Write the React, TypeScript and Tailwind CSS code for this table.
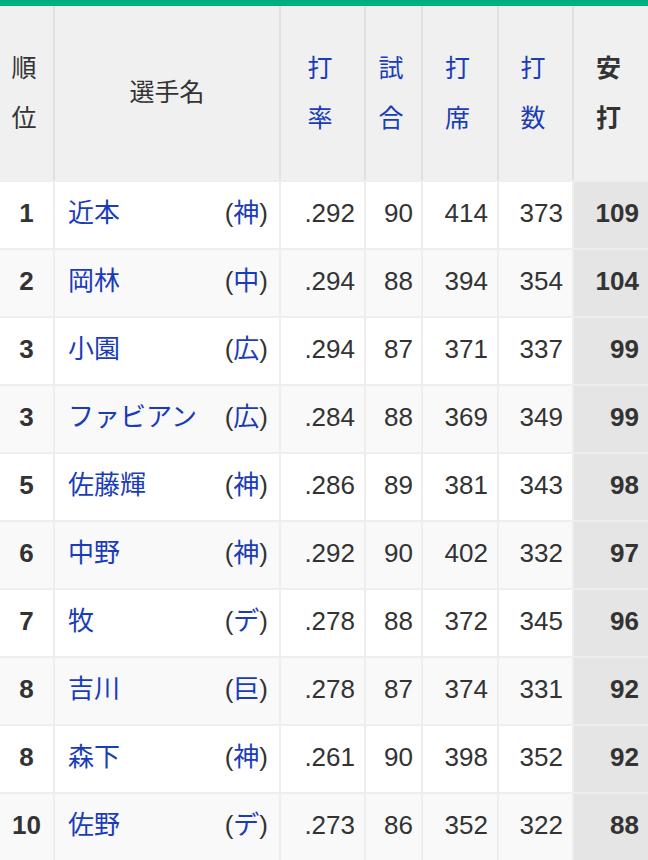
const rows = [
  { rank: "1", name: "近本", team: "神", avg: ".292", games: "90", pa: "414", ab: "373", hits: "109" },
  { rank: "2", name: "岡林", team: "中", avg: ".294", games: "88", pa: "394", ab: "354", hits: "104" },
  { rank: "3", name: "小園", team: "広", avg: ".294", games: "87", pa: "371", ab: "337", hits: "99" },
  { rank: "3", name: "ファビアン", team: "広", avg: ".284", games: "88", pa: "369", ab: "349", hits: "99" },
  { rank: "5", name: "佐藤輝", team: "神", avg: ".286", games: "89", pa: "381", ab: "343", hits: "98" },
  { rank: "6", name: "中野", team: "神", avg: ".292", games: "90", pa: "402", ab: "332", hits: "97" },
  { rank: "7", name: "牧", team: "デ", avg: ".278", games: "88", pa: "372", ab: "345", hits: "96" },
  { rank: "8", name: "吉川", team: "巨", avg: ".278", games: "87", pa: "374", ab: "331", hits: "92" },
  { rank: "8", name: "森下", team: "神", avg: ".261", games: "90", pa: "398", ab: "352", hits: "92" },
  { rank: "10", name: "佐野", team: "デ", avg: ".273", games: "86", pa: "352", ab: "322", hits: "88" },
];

const cols = "grid grid-cols-[53px_224px_83px_55px_74px_73px_74px] gap-x-[2px]";

function HeadCell({ top, bottom, link, bold }: { top: string; bottom: string; link?: boolean; bold?: boolean }) {
  return (
    <div
      className={`flex flex-col items-center justify-center bg-[#f0f0f0] text-[25px] leading-[50px] pr-[5px] ${
        link ? "text-[#1a3cb8]" : "text-[#333]"
      } ${bold ? "font-bold bg-[#e5e5e5]" : ""}`}
    >
      <span>{top}</span>
      <span>{bottom}</span>
    </div>
  );
}

export default function App() {
  return (
    <div className="w-[648px] h-[860px] overflow-hidden bg-white font-['Liberation_Sans','Noto_Sans_CJK_JP',sans-serif] text-[#333]">
      <div className="h-[6px] bg-[#00ae80]" />

      {/* Header */}
      <div className={`${cols} bg-[#e0e0e0] h-[174px]`}>
        <HeadCell top="順" bottom="位" />
        <div className="flex items-center justify-center bg-[#f0f0f0] text-[25px]">選手名</div>
        <HeadCell top="打" bottom="率" link />
        <HeadCell top="試" bottom="合" link />
        <HeadCell top="打" bottom="席" link />
        <HeadCell top="打" bottom="数" link />
        <HeadCell top="安" bottom="打" bold />
      </div>

      {/* Body */}
      <div className="flex flex-col gap-y-[2px] bg-[#eeeeee] pt-[2px]">
        {rows.map((r, i) => {
          const bg = i % 2 === 0 ? "bg-white" : "bg-[#f9f9f9]";
          return (
            <div key={i} className={`${cols} h-[66px] text-[26px]`}>
              <div className={`${bg} flex items-center justify-center font-bold pb-[3px]`}>{r.rank}</div>
              <div className={`${bg} flex items-center justify-between pl-[13px] pr-[11px] pb-[3px]`}>
                <span className="text-[#1a3cb8]">{r.name}</span>
                <span>
                  (<span className="text-[#1a3cb8]">{r.team}</span>)
                </span>
              </div>
              <div className={`${bg} flex items-center justify-end pr-[9px] pb-[3px]`}>{r.avg}</div>
              <div className={`${bg} flex items-center justify-end pr-[8px] pb-[3px]`}>{r.games}</div>
              <div className={`${bg} flex items-center justify-end pr-[9px] pb-[3px]`}>{r.pa}</div>
              <div className={`${bg} flex items-center justify-end pr-[9px] pb-[3px]`}>{r.ab}</div>
              <div className="bg-[#e5e5e5] flex items-center justify-end pr-[9px] pb-[3px] font-bold">{r.hits}</div>
            </div>
          );
        })}
      </div>
    </div>
  );
}
